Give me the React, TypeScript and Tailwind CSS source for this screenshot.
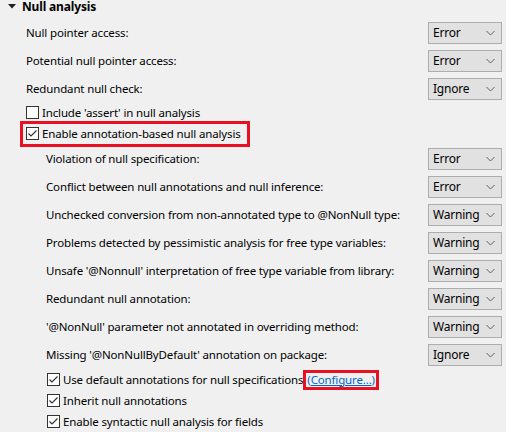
import { ReactNode } from "react";

const font = { fontFamily: "'Segoe UI', 'Noto Sans', sans-serif" };

function Combo({ value }: { value: string }) {
  return (
    <div className="flex h-[22px] w-[74px] items-center justify-between border border-[#adadad] bg-[#e1e1e1] pl-[4px] pr-[6px] text-[12px] tracking-[-0.2px] text-black">
      <span>{value}</span>
      <svg width="9" height="6" viewBox="0 0 9 6" className="text-[#606060]">
        <path d="M0.5 1 L4.5 5 L8.5 1" fill="none" stroke="currentColor" strokeWidth="1" />
      </svg>
    </div>
  );
}

function ComboRow({ label, value, indent }: { label: string; value: string; indent?: boolean }) {
  return (
    <div className="flex h-[28px] items-center justify-between pr-[4px]">
      <span className={`whitespace-nowrap ${indent ? "pl-[46px]" : "pl-[26px]"}`}>{label}</span>
      <Combo value={value} />
    </div>
  );
}

function Check({ checked }: { checked: boolean }) {
  return (
    <span className="flex h-[13px] w-[13px] shrink-0 items-center justify-center border border-[#333333] bg-white">
      {checked && (
        <svg width="11" height="11" viewBox="0 0 11 11">
          <path d="M1.5 5.5 L4 8 L9.5 2.5" fill="none" stroke="#333333" strokeWidth="1.2" />
        </svg>
      )}
    </span>
  );
}

function CheckRow({
  label,
  checked,
  indent,
  height,
  children,
}: {
  label: string;
  checked: boolean;
  indent?: boolean;
  height: string;
  children?: ReactNode;
}) {
  return (
    <div className={`flex items-center whitespace-nowrap ${height} ${indent ? "pl-[47px]" : "pl-[26px]"}`}>
      <Check checked={checked} />
      <span className="ml-[3px]">{label}</span>
      {children}
    </div>
  );
}

export default function App() {
  return (
    <div
      className="h-[432px] w-[506px] overflow-hidden bg-[#f0f0f0] text-[11.5px] leading-none tracking-[-0.15px] text-black"
      style={font}
    >
      <div className="flex h-[19px] items-start">
        <svg width="8" height="5" viewBox="0 0 8 5" className="ml-[8px] mt-[4px]">
          <path d="M0 0 L8 0 L4 4.5 Z" fill="#1e1e1e" />
        </svg>
        <span className="ml-[6px] text-[12px] leading-[13px] font-bold">Null analysis</span>
      </div>
      <ComboRow label="Null pointer access:" value="Error" />
      <ComboRow label="Potential null pointer access:" value="Error" />
      <ComboRow label="Redundant null check:" value="Ignore" />
      <CheckRow label="Include 'assert' in null analysis" checked={false} height="h-[19px]" />
      <div className="flex h-[23px] items-center pl-[20px]">
        <div className="flex h-[26px] items-center whitespace-nowrap border-[3px] border-[#e81123] pl-[3px] pr-[6px]">
          <Check checked />
          <span className="ml-[3px]">Enable annotation-based null analysis</span>
        </div>
      </div>
      <ComboRow indent label="Violation of null specification:" value="Error" />
      <ComboRow indent label="Conflict between null annotations and null inference:" value="Error" />
      <ComboRow indent label="Unchecked conversion from non-annotated type to @NonNull type:" value="Warning" />
      <ComboRow indent label="Problems detected by pessimistic analysis for free type variables:" value="Warning" />
      <ComboRow indent label="Unsafe '@Nonnull' interpretation of free type variable from library:" value="Warning" />
      <ComboRow indent label="Redundant null annotation:" value="Warning" />
      <ComboRow indent label="'@NonNull' parameter not annotated in overriding method:" value="Warning" />
      <ComboRow indent label="Missing '@NonNullByDefault' annotation on package:" value="Ignore" />
      <CheckRow indent label="Use default annotations for null specifications" checked height="h-[21px]">
        <span className="flex h-[20px] items-center border-[3px] border-[#e81123] px-[1px] text-[#0066cc]">
          (<span className="underline">Configure...</span>)
        </span>
      </CheckRow>
      <CheckRow indent label="Inherit null annotations" checked height="h-[21px]" />
      <CheckRow indent label="Enable syntactic null analysis for fields" checked height="h-[21px]" />
    </div>
  );
}
